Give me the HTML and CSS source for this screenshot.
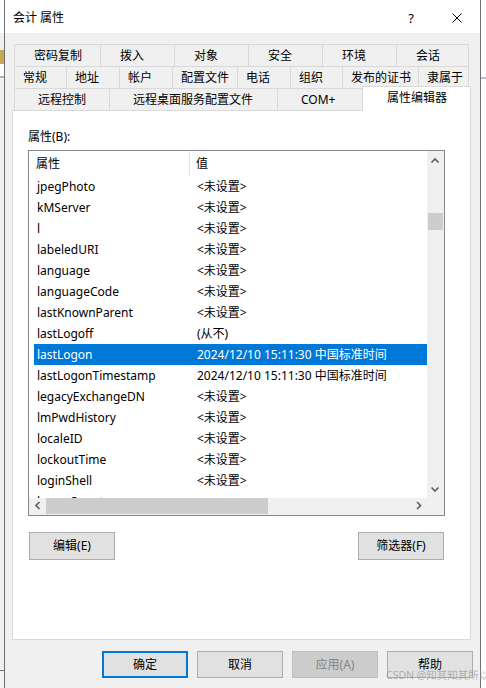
FILE: index.html
```html
<!DOCTYPE html>
<html lang="zh-CN">
<head>
<meta charset="utf-8">
<title>会计 属性</title>
<link rel="stylesheet" href="styles.css">
</head>
<body>
<div class="screen">
  <div class="side-left">
    <div class="sl-white"></div>
    <div class="sl-gray"></div>
    <div class="sl-icon"></div>
    <div class="sl-white2"></div>
    <div class="sl-line"></div>
    <div class="sl-fill"></div>
    <div class="sl-dark"></div>
    <div class="sl-rest"></div>
  </div>
  <div class="window">
    <div class="titlebar">
      <span class="title">会计 属性</span>
      <span class="cap-btn help">?</span>
      <span class="cap-btn close">
        <svg width="10" height="10" viewBox="0 0 10 10"><path d="M0.5 0.5 L9.5 9.5 M9.5 0.5 L0.5 9.5" stroke="#000" stroke-width="1" fill="none"/></svg>
      </span>
    </div>
    <div class="client">
      <div class="tabs">
        <div class="tab-row r1">
          <div class="tab">密码复制</div>
          <div class="tab">拨入</div>
          <div class="tab">对象</div>
          <div class="tab">安全</div>
          <div class="tab">环境</div>
          <div class="tab">会话</div>
        </div>
        <div class="tab-row r2">
          <div class="tab">常规</div>
          <div class="tab">地址</div>
          <div class="tab">帐户</div>
          <div class="tab">配置文件</div>
          <div class="tab">电话</div>
          <div class="tab">组织</div>
          <div class="tab">发布的证书</div>
          <div class="tab">隶属于</div>
        </div>
        <div class="tab-row r3">
          <div class="tab">远程控制</div>
          <div class="tab">远程桌面服务配置文件</div>
          <div class="tab">COM+</div>
          <div class="tab selected">属性编辑器</div>
        </div>
      </div>
      <div class="panel">
        <div class="label">属性(B):</div>
        <div class="list">
          <div class="view">
            <div class="header">
              <div class="hcell h1">属性</div>
              <div class="hcell h2">值</div>
            </div>
            <div class="rows">
              <div class="row"><span class="name">jpegPhoto</span><span class="val">&lt;未设置&gt;</span></div>
              <div class="row"><span class="name">kMServer</span><span class="val">&lt;未设置&gt;</span></div>
              <div class="row"><span class="name">l</span><span class="val">&lt;未设置&gt;</span></div>
              <div class="row"><span class="name">labeledURI</span><span class="val">&lt;未设置&gt;</span></div>
              <div class="row"><span class="name">language</span><span class="val">&lt;未设置&gt;</span></div>
              <div class="row"><span class="name">languageCode</span><span class="val">&lt;未设置&gt;</span></div>
              <div class="row"><span class="name">lastKnownParent</span><span class="val">&lt;未设置&gt;</span></div>
              <div class="row"><span class="name">lastLogoff</span><span class="val">(从不)</span></div>
              <div class="row sel"><span class="name">lastLogon</span><span class="val">2024/12/10 15:11:30 中国标准时间</span></div>
              <div class="row"><span class="name">lastLogonTimestamp</span><span class="val">2024/12/10 15:11:30 中国标准时间</span></div>
              <div class="row"><span class="name">legacyExchangeDN</span><span class="val">&lt;未设置&gt;</span></div>
              <div class="row"><span class="name">lmPwdHistory</span><span class="val">&lt;未设置&gt;</span></div>
              <div class="row"><span class="name">localeID</span><span class="val">&lt;未设置&gt;</span></div>
              <div class="row"><span class="name">lockoutTime</span><span class="val">&lt;未设置&gt;</span></div>
              <div class="row"><span class="name">loginShell</span><span class="val">&lt;未设置&gt;</span></div>
              <div class="row"><span class="name">logonCount</span><span class="val"></span></div>
            </div>
          </div>
          <div class="vscroll">
            <div class="arrow">
              <svg width="17" height="17" viewBox="0 0 17 17"><polyline points="4.5,11.5 8,8 11.5,11.5" fill="none" stroke="#606060" stroke-width="1.7"/></svg>
            </div>
            <div class="vthumb"></div>
            <div class="vspace"></div>
            <div class="arrow">
              <svg width="17" height="17" viewBox="0 0 17 17"><polyline points="4.5,6.5 8,10 11.5,6.5" fill="none" stroke="#606060" stroke-width="1.7"/></svg>
            </div>
          </div>
          <div class="hscroll">
            <div class="harrow">
              <svg width="17" height="17" viewBox="0 0 17 17"><polyline points="10.5,4 7,7.5 10.5,11" fill="none" stroke="#606060" stroke-width="1.7"/></svg>
            </div>
            <div class="hthumb"></div>
            <div class="hspace"></div>
            <div class="harrow">
              <svg width="17" height="17" viewBox="0 0 17 17"><polyline points="7,4 10.5,7.5 7,11" fill="none" stroke="#606060" stroke-width="1.7"/></svg>
            </div>
          </div>
          <div class="corner"></div>
        </div>
        <div class="list-actions">
          <div class="btn btn-tall">编辑(E)</div>
          <div class="btn btn-tall">筛选器(F)</div>
        </div>
      </div>
      <div class="dialog-actions">
        <div class="btn focused">确定</div>
        <div class="btn">取消</div>
        <div class="btn disabled">应用(A)</div>
        <div class="btn">帮助</div>
      </div>
    </div>
  </div>
  <div class="side-right">
    <div class="sr-white"></div>
    <div class="sr-line"></div>
    <div class="sr-rest"></div>
  </div>
  <div class="watermark">CSDN @知其知其所以</div>
</div>
</body>
</html>
```

FILE: styles.css
```css
html, body {
  margin: 0;
  padding: 0;
}

body {
  width: 486px;
  height: 688px;
  overflow: hidden;
  background: #ffffff;
  font-family: "Noto Sans", "Noto Sans CJK SC", sans-serif;
  font-size: 12px;
  color: #000000;
}

.screen {
  position: relative;
  display: flex;
  width: 486px;
  height: 688px;
}

/* outside strips (background windows) */
.side-left {
  width: 4px;
  display: flex;
  flex-direction: column;
}
.sl-white { height: 33px; background: #ffffff; }
.sl-gray { height: 17px; background: #f0f0f0; }
.sl-icon { height: 14px; background: #c7a657; }
.sl-white2 { height: 12px; background: #ffffff; }
.sl-line { height: 2px; background: #a8b4c4; }
.sl-fill { height: 592px; background: #f0f0f0; }
.sl-dark { height: 1px; background: #707070; }
.sl-rest { flex: 1; background: #f4f4f4; }

.side-right {
  width: 5px;
  display: flex;
  flex-direction: column;
}
.sr-white { height: 77px; background: #ffffff; }
.sr-line { height: 2px; background: #b8c2cf; }
.sr-rest { flex: 1; background: #ffffff; }

/* window */
.window {
  width: 477px;
  box-sizing: border-box;
  border-left: 1px solid #707070;
  border-right: 1px solid #707070;
  display: flex;
  flex-direction: column;
}

.titlebar {
  height: 33px;
  box-sizing: border-box;
  padding-top: 3px;
  background: #ffffff;
  display: flex;
  align-items: center;
}

.title {
  flex: 1;
  padding-left: 8px;
  line-height: 16px;
}

.cap-btn {
  width: 46px;
  height: 30px;
  display: flex;
  align-items: center;
  justify-content: center;
}

.help {
  font-size: 13px;
  line-height: 16px;
}

.client {
  flex: 1;
  background: #f0f0f0;
  padding: 11px 0 0 7px;
}

/* tabs */
.tabs {
  margin-left: 2px;
}

.tab-row {
  display: grid;
  height: 22px;
}

.r1 { grid-template-columns: 86px 74px 74px 74px 74px 73px; }
.r2 { grid-template-columns: 52px 53px 53px 65px 53px 52px 76px 51px; }
.r3 { grid-template-columns: 95px 168px 85px 109px; }

.tab {
  box-sizing: border-box;
  height: 22px;
  border-top: 1px solid #d9d9d9;
  border-left: 1px solid #d9d9d9;
  background: #f0f0f0;
  line-height: 21px;
  white-space: nowrap;
}

.tab:last-child {
  border-right: 1px solid #d9d9d9;
}

.r1 .tab { padding-left: 19px; }
.r2 .tab { padding-left: 8px; }
.r3 .tab { padding-left: 23px; }

.r3 .tab.selected {
  height: 25px;
  margin-top: -2px;
  margin-bottom: -1px;
  background: #ffffff;
  padding-left: 24px;
  z-index: 1;
}

/* panel */
.panel {
  width: 459px;
  height: 530px;
  box-sizing: border-box;
  border: 1px solid #d9d9d9;
  background: #ffffff;
  padding: 18px 0 0 15px;
}

.label {
  height: 16px;
  line-height: 16px;
}

.list {
  margin-top: 5px;
  width: 417px;
  height: 366px;
  box-sizing: border-box;
  border: 1px solid #828790;
  display: grid;
  grid-template-columns: 398px 17px;
  grid-template-rows: 347px 17px;
}

.view {
  overflow: hidden;
  background: #ffffff;
}

.header {
  height: 25px;
  display: flex;
}

.hcell {
  line-height: 25px;
  box-sizing: border-box;
}

.h1 {
  width: 161px;
  padding-left: 7px;
  border-right: 1px solid #e5e5e5;
}

.h2 {
  padding-left: 6px;
}

.rows {
  padding-left: 5px;
}

.row {
  display: flex;
  height: 21px;
  line-height: 21px;
  white-space: nowrap;
}

.name {
  width: 163px;
  flex: none;
  box-sizing: border-box;
  padding-left: 3px;
}

.row.sel {
  background: #0078d7;
  color: #ffffff;
}

/* scrollbars */
.vscroll {
  background: #f0f0f0;
  display: flex;
  flex-direction: column;
}

.arrow, .harrow {
  width: 17px;
  height: 17px;
  flex: none;
}

.arrow svg, .harrow svg {
  display: block;
}

.vthumb {
  margin: 45px 0 0 1px;
  width: 15px;
  height: 17px;
  background: #cdcdcd;
}

.vspace { flex: 1; }

.hscroll {
  background: #f0f0f0;
  display: flex;
}

.hthumb {
  width: 222px;
  height: 16px;
  margin-top: 0;
  background: #cdcdcd;
}

.hspace { flex: 1; }

.corner {
  background: #f0f0f0;
}

/* buttons */
.list-actions {
  display: flex;
  justify-content: space-between;
  width: 415px;
  margin: 16px 0 0 1px;
}

.btn {
  width: 86px;
  height: 27px;
  box-sizing: border-box;
  border: 1px solid #adadad;
  background: #e1e1e1;
  display: flex;
  align-items: center;
  justify-content: center;
  line-height: 16px;
}

.btn-tall {
  height: 28px;
}

.btn.focused {
  border: 2px solid #0078d7;
}

.btn.disabled {
  background: #cccccc;
  border-color: #bfbfbf;
  color: #838383;
}

.dialog-actions {
  display: flex;
  justify-content: flex-end;
  gap: 9px;
  margin-top: 11px;
  padding-right: 7px;
}

.watermark {
  position: absolute;
  left: 386px;
  top: 668px;
  font-size: 10.5px;
  line-height: 14px;
  color: rgba(150, 150, 150, 0.7);
  white-space: nowrap;
}
```
